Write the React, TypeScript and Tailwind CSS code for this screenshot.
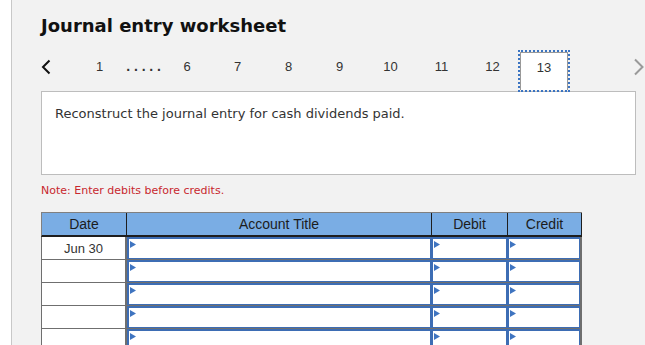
import React from 'react';

const pages = ['7', '8', '9', '10', '11', '12'];
const rows = ['Jun 30', '', '', '', ''];

function Marker() {
  return (
    <svg className="absolute left-[1px] top-[2px]" width="6" height="7" viewBox="0 0 6 7">
      <polygon points="0,0 6,3.5 0,7" fill="#3f74c0" />
    </svg>
  );
}

function InputCell({ width }: { width: string }) {
  return (
    <div className={`${width} relative h-full bg-white border border-[#3d6db4] border-l-2 border-t-2`}>
      <Marker />
    </div>
  );
}

export default function App() {
  return (
    <div className="flex h-[345px] w-[645px] overflow-hidden bg-white" style={{ fontFamily: '"DejaVu Sans", Verdana, sans-serif' }}>
      <div className="w-[12px] shrink-0 border-r border-[#c8c8c8]" />
      <div className="flex-1 bg-[#f2f2f2] pl-[29px] pt-[15px]">
        <h1 className="text-[18px] leading-[22px] font-bold text-[#111]">Journal entry worksheet</h1>

        {/* page nav */}
        <div className="mt-[13px] flex h-[41px] items-start text-[13px] text-[#333]" style={{ fontFamily: '"Liberation Sans", Arial, sans-serif' }}>
          <div className="flex h-[34px] w-[33px] items-center">
            <svg width="10" height="16" viewBox="0 0 10 16">
              <polyline points="8.5,1.5 2,8 8.5,14.5" fill="none" stroke="#111" strokeWidth="2" />
            </svg>
          </div>
          <div className="flex h-[34px] w-[51px] items-center justify-center">1</div>
          <div className="flex h-[34px] w-[37px] items-center justify-center pb-[2px] pl-[4px] text-[14px] font-bold tracking-[3.8px]">.....</div>
          <div className="flex h-[34px] w-[50px] items-center justify-center">6</div>
          {pages.map((p) => (
            <div key={p} className="flex h-[34px] w-[51px] items-center justify-center">
              {p}
            </div>
          ))}
          <div className="relative z-10 h-[42px] w-[52px] border-2 border-dotted border-[#3b74c2]">
            <div className="flex h-full items-start justify-center border border-b-0 border-[#999] bg-white pt-[5px]">
              13
            </div>
          </div>
          <div className="flex h-[34px] flex-1 items-center justify-end">
            <svg width="12" height="18" viewBox="0 0 12 18">
              <polyline points="2,1.5 9.5,9 2,16.5" fill="none" stroke="#9a9a9a" strokeWidth="2" />
            </svg>
          </div>
        </div>

        {/* question box */}
        <div className="h-[84px] w-[595px] border border-[#bdbdbd] bg-white pl-[13px] pt-[14px]">
          <p className="text-[13px] leading-[16px] text-[#333]">Reconstruct the journal entry for cash dividends paid.</p>
        </div>

        <p className="mt-[9px] text-[11px] leading-[14px] text-[#c8282e]">Note: Enter debits before credits.</p>

        {/* entry table */}
        <div className="mt-[14px] w-[541px] text-[13px]" style={{ fontFamily: '"Liberation Sans", Arial, sans-serif' }}>
          <div className="flex h-[25px] border-t border-l border-[#808080] border-b-2 border-b-[#1e1e1e] bg-[#7aade4] text-[14px] text-[#1c1c1c]">
            <div className="flex w-[85px] items-center justify-center border-r border-[#1e1e1e]">Date</div>
            <div className="flex w-[305px] items-center justify-center border-r border-[#1e1e1e]">Account Title</div>
            <div className="flex w-[76px] items-center justify-center border-r border-[#1e1e1e]">Debit</div>
            <div className="flex w-[74px] items-center justify-center border-r border-[#1e1e1e]">Credit</div>
          </div>
          {rows.map((d, i) => (
            <div key={i} className="flex h-[23px] border-b border-[#6f6f6f]">
              <div className="flex w-[86px] items-center justify-center border-l border-r-2 border-[#6f6f6f] bg-white pt-[2px] text-[#333]">
                {d}
              </div>
              <InputCell width="w-[304px]" />
              <InputCell width="w-[76px]" />
              <div className="flex">
                <InputCell width="w-[73px]" />
                <div className="w-[2px] bg-[#6f6f6f]" />
              </div>
            </div>
          ))}
        </div>
      </div>
    </div>
  );
}
